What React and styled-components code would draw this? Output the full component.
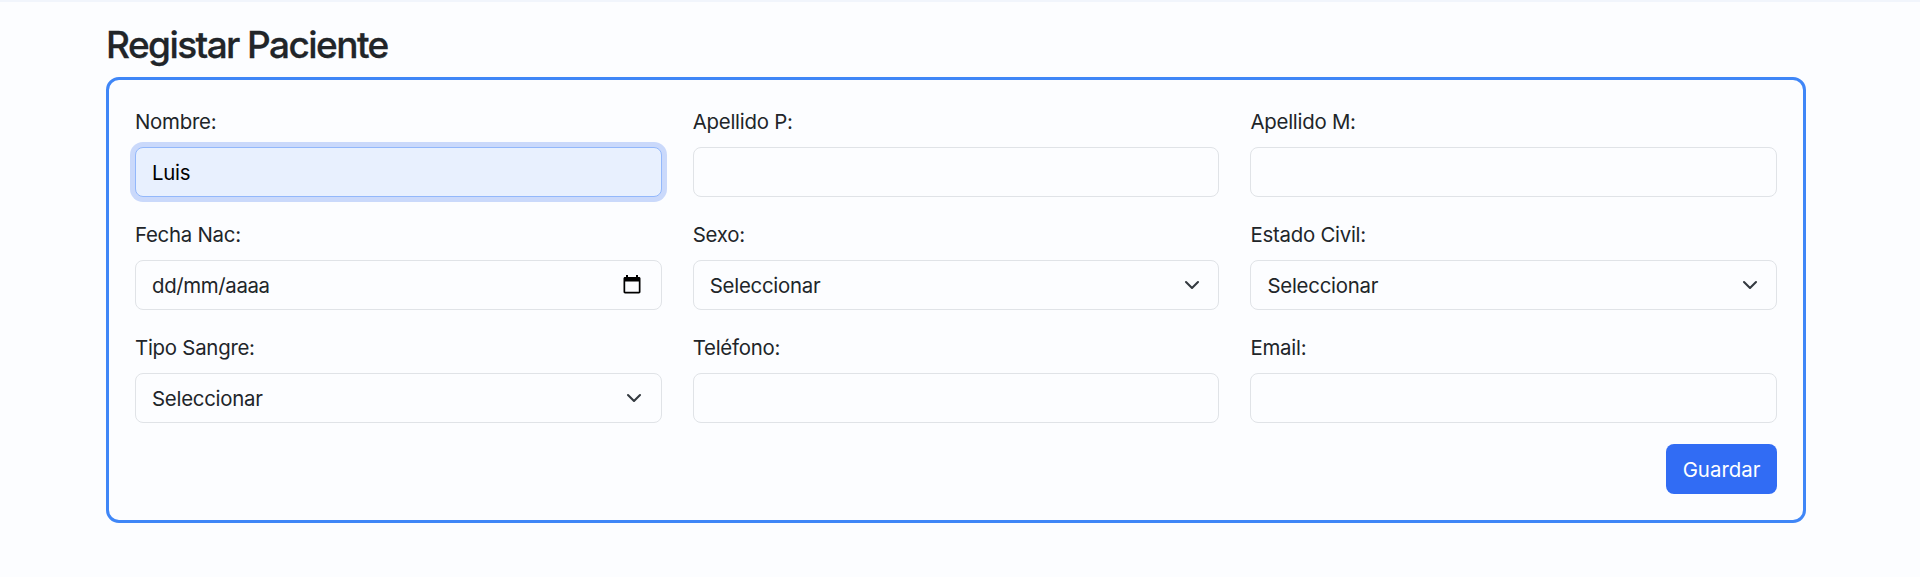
import React from "react";
import styled, { createGlobalStyle, css } from "styled-components";

const GlobalStyle = createGlobalStyle`
  *, *::before, *::after { box-sizing: border-box; }
  html { background: #fcfdff; }
  body {
    margin: 0;
    color: #212529;
    font-family: Inter, "Liberation Sans", sans-serif;
    font-size: 20.4px;
    line-height: 31px;
    letter-spacing: -0.25px;
  }
`;

const Page = styled.main`
  min-height: 577px;
  padding: 21px 114px 0 106px;
  border-top: 2px solid #f1f5fc;
`;

const Title = styled.h3`
  margin: 0 0 10px;
  font-size: 37px;
  font-weight: 500;
  line-height: 44px;
  letter-spacing: -1.58px;
  -webkit-text-stroke: 0.3px currentColor;
`;

const Card = styled.form`
  display: flex;
  flex-direction: column;
  height: 446px;
  padding: 26px;
  border: 3px solid #3f86f7;
  border-radius: 13px;
`;

const Fields = styled.div`
  display: grid;
  grid-template-columns: repeat(3, 1fr);
  gap: 22px 31.2px;
`;

const Field = styled.label`
  display: flex;
  flex-direction: column;
  gap: 10px;
`;

const LabelText = styled.span`
  line-height: 31px;
`;

const controlStyle = css`
  width: 100%;
  height: 50px;
  padding: 0 16px;
  border: 1px solid #e0e3e7;
  border-radius: 8px;
  outline: none;
  background: transparent;
  color: #212529;
  font: inherit;
  letter-spacing: inherit;
  appearance: none;
`;

const Input = styled.input`
  ${controlStyle}
  ${({ $active }) =>
    $active &&
    css`
      border-color: #93b8fb;
      background: #e8f0fe;
      color: #000;
      box-shadow: 0 0 0 5px #cad9fb;
    `}
  &::placeholder { color: #212529; opacity: 1; letter-spacing: -0.35px; }
`;

const Select = styled.select`
  ${controlStyle}
`;

const ControlWrap = styled.span`
  display: grid;
  align-items: center;
  > * { grid-area: 1 / 1; }
`;

const Adornment = styled.svg`
  justify-self: end;
  margin-right: ${({ $inset }) => $inset}px;
  pointer-events: none;
`;

const Actions = styled.div`
  display: flex;
  justify-content: flex-end;
  margin-top: 21px;
`;

const Button = styled.button`
  width: 111px;
  height: 50px;
  padding: 0;
  border: 0;
  border-radius: 8px;
  background: #316cf4;
  color: #fff;
  font: inherit;
  letter-spacing: 0;
`;

const Chevron = () => (
  <Adornment $inset={19.5} width="16" height="16" viewBox="0 0 16 16" fill="none">
    <path d="m2 5 6 6 6-6" stroke="#343a40" strokeWidth="2.1" strokeLinecap="round" strokeLinejoin="round" />
  </Adornment>
);

const Calendar = () => (
  <Adornment $inset={21} width="18" height="20" viewBox="0 0 18 20">
    <path
      d="M16 2h-1V0h-2v2H5V0H3v2H2C1 2 .5 2.7.5 3.6v13.2c0 .9.7 1.6 1.6 1.6h13.8c.9 0 1.6-.7 1.6-1.6V3.6C17.5 2.7 17 2 16 2Zm-.2 14.7H2.2V6.5h13.6v10.2Z"
      fill="#000"
    />
  </Adornment>
);

const fields = [
  { label: "Nombre:", value: "Luis", active: true },
  { label: "Apellido P:" },
  { label: "Apellido M:" },
  { label: "Fecha Nac:", kind: "date" },
  { label: "Sexo:", kind: "select" },
  { label: "Estado Civil:", kind: "select" },
  { label: "Tipo Sangre:", kind: "select" },
  { label: "Teléfono:" },
  { label: "Email:" },
];

function Control({ kind, value, active }) {
  if (kind === "select") {
    return (
      <ControlWrap>
        <Select>
          <option>Seleccionar</option>
        </Select>
        <Chevron />
      </ControlWrap>
    );
  }
  if (kind === "date") {
    return (
      <ControlWrap>
        <Input placeholder="dd/mm/aaaa" />
        <Calendar />
      </ControlWrap>
    );
  }
  return <Input defaultValue={value} $active={active} />;
}

export default function App() {
  return (
    <>
      <GlobalStyle />
      <Page>
        <Title>Registar Paciente</Title>
        <Card onSubmit={(e) => e.preventDefault()}>
          <Fields>
            {fields.map(({ label, ...control }) => (
              <Field key={label}>
                <LabelText>{label}</LabelText>
                <Control {...control} />
              </Field>
            ))}
          </Fields>
          <Actions>
            <Button type="submit">Guardar</Button>
          </Actions>
        </Card>
      </Page>
    </>
  );
}
